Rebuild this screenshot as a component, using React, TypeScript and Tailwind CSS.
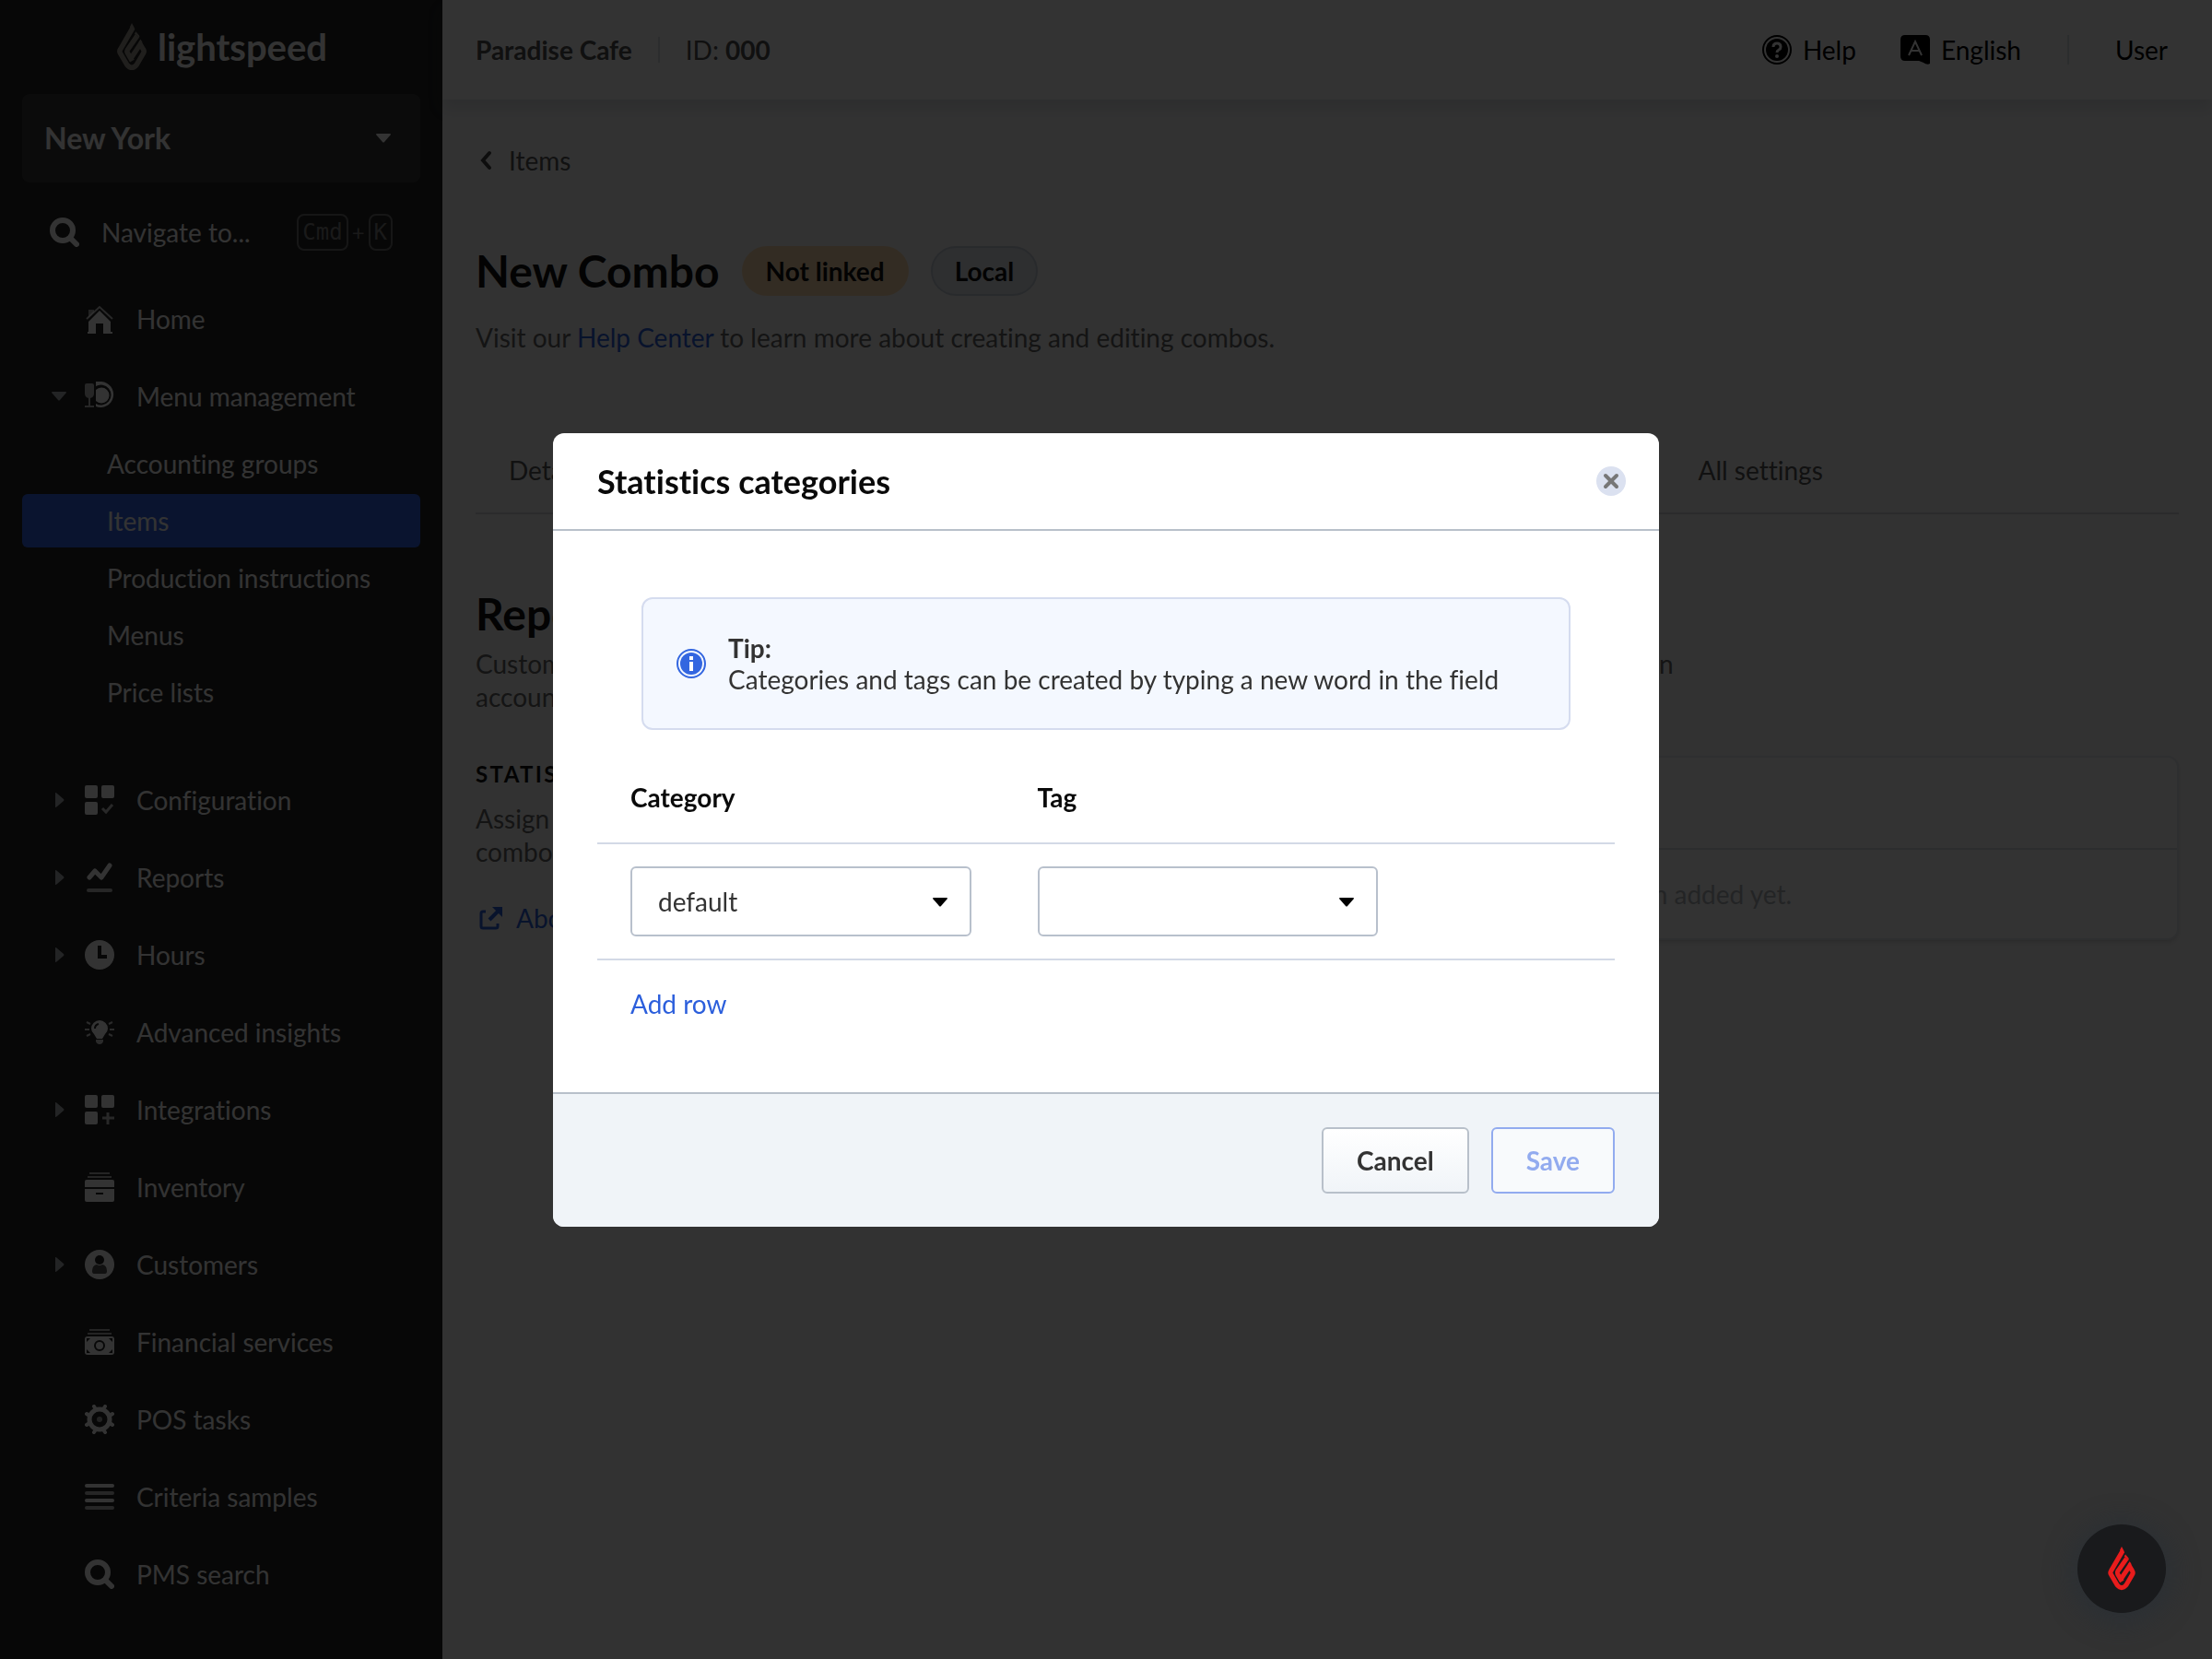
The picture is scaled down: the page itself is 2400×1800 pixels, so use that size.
import React, { useState } from 'react';
import { X } from 'lucide-react';

type IconProps = { className?: string };

const Flame: React.FC<IconProps> = ({ className }) => (
  <svg viewBox="0 0 92 142" className={className} fill="none" stroke="currentColor" strokeWidth="15" aria-hidden="true">
    <path d="M49 14 12 78q-4 6 0 12l20 34q14 16 28 0l20-34q4-6 0-12l-9-15-28 42" />
    <path d="M62 38 33 80q-2 4 0 8l14 24" />
    <path d="M46 0 40 12 53 20q2-3 0-7zM58 25 54 32 68 43q2-3 0-6zM72 48 66 58h12z" fill="currentColor" stroke="none" />
  </svg>
);

const HomeIcon = () => (
  <svg viewBox="0 0 32 32" className="size-8" fill="currentColor" aria-hidden="true">
    <path d="M16 7 28 19v11h2v2H20V21h-8v11H3v-2h1V19z" />
    <path d="M4 6h6v3l-6 6z" opacity=".6" />
    <path d="M2 16 16 3l14 13" fill="none" stroke="currentColor" strokeWidth="2" opacity=".75" />
  </svg>
);

const MenuIcon = () => (
  <svg viewBox="0 0 32 32" className="size-8" fill="currentColor" aria-hidden="true">
    <path d="M0 4q0-2 2-2h6q2 0 2 2v9q0 4-4 5v8h4v2H0v-2h4v-8q-4-1-4-5z" opacity=".7" />
    <path d="M12 9a8.500 8.500 0 1 1 0 12z" />
    <path d="M12 0h6a14 14 0 1 1-6 27v-3a11 11 0 1 0 0-19z" />
  </svg>
);

const GridCheckIcon = () => (
  <svg viewBox="0 0 32 32" className="size-8" fill="currentColor" aria-hidden="true">
    <rect width="14" height="14" rx="2" />
    <rect x="18" width="14" height="14" rx="2" />
    <rect y="18" width="14" height="14" rx="2" />
    <path d="m19 25 4 4 7-8" fill="none" stroke="currentColor" strokeWidth="3" opacity=".75" />
  </svg>
);

const GridPlusIcon = () => (
  <svg viewBox="0 0 32 32" className="size-8" fill="currentColor" aria-hidden="true">
    <rect width="14" height="14" rx="2" />
    <rect x="18" width="14" height="14" rx="2" />
    <rect y="18" width="14" height="14" rx="2" />
    <path d="M25 19v13M19 25h13" fill="none" stroke="currentColor" strokeWidth="3" opacity=".75" />
  </svg>
);

const ReportsIcon = () => (
  <svg viewBox="0 0 32 32" className="size-8" fill="none" stroke="currentColor" aria-hidden="true">
    <path d="m5 16 6-7 7 7 9-13" strokeWidth="5" strokeLinecap="round" strokeLinejoin="round" />
    <path d="M4 30h24" strokeWidth="4" strokeLinecap="round" opacity=".7" />
  </svg>
);

const HoursIcon = () => (
  <svg viewBox="0 0 32 32" className="size-8" aria-hidden="true">
    <circle cx="16" cy="16" r="16" fill="currentColor" />
    <path d="M16 6v12h8" fill="none" stroke="#232323" strokeWidth="4" />
  </svg>
);

const BulbIcon = () => (
  <svg viewBox="0 0 32 32" className="size-8" fill="currentColor" aria-hidden="true">
    <path d="M16 3a9 9 0 0 1 9 9q0 3-3 6l-3 5h-6l-3-5q-3-3-3-6a9 9 0 0 1 9-9z" />
    <path d="M12 24h8v2q-1 3-4 3t-4-3z" opacity=".8" />
    <path d="M11 12q0-4 4-5" fill="none" stroke="#232323" strokeWidth="2" />
    <path d="m2 5 4 2M0 13h5M2 20l4-2M30 5l-4 2M32 13h-5M30 20l-4-2" fill="none" stroke="currentColor" strokeWidth="2" opacity=".8" />
  </svg>
);

const InventoryIcon = () => (
  <svg viewBox="0 0 32 32" className="size-8" fill="currentColor" aria-hidden="true">
    <path d="M5 0h22v2H5zM3 4h26v2H3z" opacity=".65" />
    <path d="M2 8h28q2 0 2 2v6H0v-6q0-2 2-2z" />
    <path d="M0 18h32v12q0 2-2 2H2q-2 0-2-2zm12 4v2h8v-2z" fillRule="evenodd" />
  </svg>
);

const CustomersIcon = () => (
  <svg viewBox="0 0 32 32" className="size-8" aria-hidden="true">
    <circle cx="16" cy="16" r="16" fill="currentColor" />
    <circle cx="16" cy="11" r="5" fill="#232323" />
    <path d="M8 23q0-6 5-7 3 2 6 0 5 1 5 7 0 3-2 3H10q-2 0-2-3z" fill="#555" />
  </svg>
);

const MoneyIcon = () => (
  <svg viewBox="0 0 32 32" className="size-8" fill="currentColor" aria-hidden="true">
    <path d="M5 2h22v2H5zM3 6h26v2H3z" opacity=".65" />
    <rect y="10" width="32" height="20" rx="3" />
    <circle cx="16" cy="20" r="5" fill="none" stroke="#232323" strokeWidth="2" />
    <path d="M2 12h4l-4 4zM30 12h-4l4 4zM2 28h4l-4-4zM30 28h-4l4-4z" fill="#232323" />
  </svg>
);

const GearIcon = () => (
  <svg viewBox="0 0 32 32" className="size-8" fill="none" stroke="currentColor" aria-hidden="true">
    <circle cx="16" cy="16" r="11" strokeWidth="5" />
    <path
      d="M20 5l2-3M27 12l3-2M27 20l3 2M20 27l2 3M12 27l-2 3M5 20l-3 2M5 12l-3-2M12 5l-2-3"
      strokeWidth="4"
      strokeLinecap="round"
    />
    <circle cx="16" cy="16" r="3" fill="currentColor" stroke="none" opacity=".6" />
  </svg>
);

const ListIcon = () => (
  <svg viewBox="0 0 32 32" className="size-8" fill="none" stroke="currentColor" strokeWidth="4" strokeLinecap="round" aria-hidden="true">
    <path d="M2 4h28M2 20h28" />
    <path d="M2 12h28M2 28h28" opacity=".7" />
  </svg>
);

const SearchIcon = () => (
  <svg viewBox="0 0 32 32" className="size-8" fill="none" stroke="currentColor" aria-hidden="true">
    <circle cx="14" cy="14" r="11" strokeWidth="6" />
    <path d="m22 22 7 7" strokeWidth="6" strokeLinecap="round" />
  </svg>
);

const CaretDown: React.FC<IconProps> = ({ className }) => (
  <svg viewBox="0 0 16 10" className={className} fill="currentColor" aria-hidden="true">
    <path d="M1 0h14q1 0 1 1L9 9q-1 1-2 0L0 1q0-1 1-1z" />
  </svg>
);

const CaretRight = () => (
  <svg viewBox="0 0 10 16" className="h-4 w-2.5" fill="currentColor" aria-hidden="true">
    <path d="M0 0q1 0 2 1l7 6q1 1 0 2l-7 6q-1 1-2 1z" />
  </svg>
);

interface NavItem {
  label: string;
  icon: React.ReactNode;
  expandable?: boolean;
  children?: string[];
}

const navItems: NavItem[] = [
  { label: 'Home', icon: <HomeIcon /> },
  {
    label: 'Menu management',
    icon: <MenuIcon />,
    children: ['Accounting groups', 'Items', 'Production instructions', 'Menus', 'Price lists'],
  },
  { label: 'Configuration', icon: <GridCheckIcon />, expandable: true },
  { label: 'Reports', icon: <ReportsIcon />, expandable: true },
  { label: 'Hours', icon: <HoursIcon />, expandable: true },
  { label: 'Advanced insights', icon: <BulbIcon /> },
  { label: 'Integrations', icon: <GridPlusIcon />, expandable: true },
  { label: 'Inventory', icon: <InventoryIcon /> },
  { label: 'Customers', icon: <CustomersIcon />, expandable: true },
  { label: 'Financial services', icon: <MoneyIcon /> },
  { label: 'POS tasks', icon: <GearIcon /> },
  { label: 'Criteria samples', icon: <ListIcon /> },
  { label: 'PMS search', icon: <SearchIcon /> },
];

const tabs = ['Details', 'Item groups', 'Price points', 'Availability', 'Reporting', 'Advanced', 'All settings'];

const Sidebar: React.FC = () => (
  <aside className="w-[480px] shrink-0 bg-[#232323] px-6 text-white">
    <div className="flex h-[102px] items-center justify-center gap-2.5">
      <Flame className="h-[52px] w-9 text-[#a09a90]" />
      <span className="text-[40px] leading-none font-bold">lightspeed</span>
    </div>
    <button type="button" className="flex h-24 w-full items-center justify-between rounded-lg bg-[#3a3a3a] pr-8 pl-6 text-[32px] font-bold">
      New York
      <CaretDown className="h-2.5 w-4" />
    </button>
    <button type="button" className="mt-3 flex h-[84px] w-full items-center pr-[30px] pl-[30px] text-left">
      <SearchIcon />
      <span className="ml-6 flex-1">Navigate to...</span>
      <span className="flex items-center gap-1 font-['DejaVu_Sans_Mono',monospace] text-2xl text-[#808080]">
        <kbd className="rounded-lg border-2 border-[#707070] px-1 font-[inherit] leading-9">Cmd</kbd>
        <span className="font-['Lato',sans-serif]">+</span>
        <kbd className="rounded-lg border-2 border-[#707070] px-1 font-[inherit] leading-9">K</kbd>
      </span>
    </button>
    <nav className="mt-2.5">
      {navItems.map((item) => (
        <div key={item.label}>
          <a href="#" className="flex h-[84px] items-center">
            <span className="flex w-[68px] items-center pl-9 text-[#b0b4b8]">
              {item.expandable && <CaretRight />}
              {item.children && <CaretDown className="-ml-1 h-2.5 w-4" />}
            </span>
            {item.icon}
            <span className="ml-6">{item.label}</span>
          </a>
          {item.children && (
            <div className="mt-0.5 mb-[46px] flex flex-col gap-1">
              {item.children.map((child) => (
                <a
                  key={child}
                  href="#"
                  className={`flex h-[58px] items-center rounded-md pl-[92px] ${child === 'Items' ? 'bg-[#3367e8]' : ''}`}
                >
                  {child}
                </a>
              ))}
            </div>
          )}
        </div>
      ))}
    </nav>
  </aside>
);

const TopBar: React.FC = () => (
  <header className="flex h-[108px] items-center bg-white pr-12 pl-9 text-[#505050] shadow-[0_10px_16px_rgba(60,80,110,0.14)]">
    <strong>Paradise Cafe</strong>
    <span className="mx-7 h-7 w-0.5 bg-[#dde0e5]" />
    <span>
      ID: <strong>000</strong>
    </span>
    <div className="ml-auto flex items-center text-black">
      <a href="#" className="flex items-center gap-3">
        <svg viewBox="0 0 32 32" className="size-8" aria-hidden="true">
          <circle cx="16" cy="16" r="15" fill="none" stroke="currentColor" strokeWidth="2" />
          <circle cx="16" cy="16" r="12" fill="currentColor" />
          <path d="M12 13q0-4 4-4t4 4q0 2-2 3-2 1-2 3" fill="none" stroke="#fff" strokeWidth="3" />
          <circle cx="16" cy="23" r="2" fill="#fff" />
        </svg>
        Help
      </a>
      <a href="#" className="ml-12 flex items-center gap-3">
        <svg viewBox="0 0 32 32" className="size-8" aria-hidden="true">
          <path d="M5 0h22q5 0 5 5v26q-3 2-7-1l-5-2H5q-5 0-5-5V5q0-5 5-5z" fill="currentColor" />
          <path d="m9 22 7-15 7 15M12 17h8" fill="none" stroke="#fff" strokeWidth="2" />
        </svg>
        English
      </a>
      <span className="mx-[50px] h-8 w-0.5 bg-[#dde0e5]" />
      <a href="#">User</a>
    </div>
  </header>
);

const ComboPage: React.FC = () => (
  <main className="px-9 pt-12 text-[#666]">
    <a href="#" className="flex items-center gap-4 text-[#555] leading-9">
      <svg viewBox="0 0 24 24" className="-mr-1 size-6 text-[#444]" fill="none" stroke="currentColor" strokeWidth="4" strokeLinecap="round" aria-hidden="true">
        <path d="m15 4-7 8 7 8" />
      </svg>
      Items
    </a>
    <div className="mt-[72px] flex items-center">
      <h1 className="text-5xl leading-[60px] font-bold text-[#111]">New Combo</h1>
      <span className="ml-6 rounded-full bg-[#ffddb0] px-[26px] leading-[54px] font-bold text-[#111]">Not linked</span>
      <span className="ml-6 rounded-full border-2 border-[#c9d1dc] bg-[#e3e8f0] px-6 leading-[50px] font-bold text-[#111]">Local</span>
    </div>
    <p className="mt-6 leading-9">
      Visit our <a href="#" className="text-[#2c5fdc]">Help Center</a> to learn more about creating and editing combos.
    </p>
    <div role="tablist" className="mt-20 flex h-[94px] items-center gap-[90px] border-b-2 border-[#d5d8dc] pl-9 text-[#555]">
      {tabs.map((tab) => (
        <button key={tab} type="button" role="tab" aria-selected={tab === 'Reporting'}>
          {tab}
        </button>
      ))}
    </div>
    <h2 className="mt-[78px] text-5xl leading-[60px] font-bold text-[#111]">Reporting</h2>
    <p className="mt-1.5 leading-9">
      Customize how this combo is reported in the sales figures. These settings also control everything shown in
      <br />
      accounting reports and statistics.
    </p>
    <div className="mt-[46px] flex items-start gap-12">
      <section className="w-[408px]">
        <h3 className="mt-0.5 text-2xl leading-9 font-bold tracking-widest text-[#111]">STATISTICS</h3>
        <p className="mt-3 leading-9">
          Assign categories to this
          <br />
          combo for reporting.
        </p>
        <a href="#" className="mt-9 flex items-center gap-3 leading-9 text-[#2c5fdc]">
          <svg viewBox="0 0 32 32" className="size-8" fill="none" stroke="currentColor" strokeWidth="3" aria-hidden="true">
            <path d="M11 9H8q-2 0-2 2v14q0 2 2 2h14q2 0 2-2v-3" />
            <path d="M15 18 26 7" strokeWidth="4" />
            <path d="M18 4h11v11z" fill="currentColor" stroke="none" />
          </svg>
          About statistics
        </a>
      </section>
      <section className="flex-1 rounded-xl border-2 border-[#e6e9ed] bg-white text-center shadow-md">
        <div className="h-[100px] border-b-2 border-[#dde1e6]" />
        <p className="py-8 leading-8 text-[#b0b5bb]">No statistics categories have been added yet.</p>
      </section>
    </div>
  </main>
);

const selectClass =
  'h-[76px] w-full appearance-none rounded-md border-2 border-[#b8c0cc] bg-white px-7 text-[#333]';

const CategoryModal: React.FC = () => {
  const [category, setCategory] = useState('default');
  const [tag, setTag] = useState('');

  return (
    <div className="fixed inset-0 flex items-center justify-center bg-black/80">
      <div role="dialog" aria-modal="true" aria-labelledby="modal-title" className="w-1/2 overflow-hidden rounded-xl bg-white">
        <div className="flex h-[106px] items-center justify-between border-b-2 border-[#b8c0ca] pr-9 pl-12">
          <h2 id="modal-title" className="text-4xl leading-none font-bold text-[#0a0a0a]">Statistics categories</h2>
          <button type="button" aria-label="Close" className="flex size-8 items-center justify-center rounded-full bg-[#dbe1f0] text-[#777]">
            <X className="size-6" strokeWidth={4} />
          </button>
        </div>
        <div className="px-12 pt-[72px] pb-[78px]">
          <div className="mx-12 flex h-36 items-center rounded-xl border-2 border-[#d5dcef] bg-[#f4f8ff] px-9 text-[#333]">
            <svg viewBox="0 0 32 32" className="size-8 shrink-0" aria-hidden="true">
              <circle cx="16" cy="16" r="15" fill="none" stroke="#3366e0" strokeWidth="2" />
              <circle cx="16" cy="16" r="12" fill="#3366e0" />
              <path d="M14 14h4v10h-4zM14 8h4v4h-4z" fill="#fff" />
            </svg>
            <p className="ml-6 leading-[34px]">
              <strong>Tip:</strong>
              <br />
              Categories and tags can be created by typing a new word in the field
            </p>
          </div>
          <table className="mt-6 w-full table-fixed text-left">
            <thead>
              <tr className="h-[99px] border-b-2 border-[#d3d9e6] text-[#0a0a0a]">
                <th className="w-2/5 px-9 font-bold"><label htmlFor="category">Category</label></th>
                <th className="w-2/5 px-9 font-bold"><label htmlFor="tag">Tag</label></th>
                <th />
              </tr>
            </thead>
            <tbody>
              <tr className="h-[126px] border-b-2 border-[#d3d9e6]">
                <td className="px-9">
                  <div className="relative">
                    <select id="category" value={category} onChange={(e) => setCategory(e.target.value)} className={selectClass}>
                      <option>default</option>
                    </select>
                    <CaretDown className="pointer-events-none absolute top-[34px] right-[26px] h-2.5 w-4 text-black" />
                  </div>
                </td>
                <td className="px-9">
                  <div className="relative">
                    <select id="tag" value={tag} onChange={(e) => setTag(e.target.value)} className={selectClass}>
                      <option value="" />
                    </select>
                    <CaretDown className="pointer-events-none absolute top-[34px] right-[26px] h-2.5 w-4 text-black" />
                  </div>
                </td>
                <td />
              </tr>
            </tbody>
          </table>
          <button type="button" className="mt-[29px] ml-9 block leading-9 text-[#2c5fdc]">Add row</button>
        </div>
        <div className="flex items-center justify-end gap-6 border-t-2 border-[#b8c0ca] bg-[#f0f4f8] px-12 py-9">
          <button type="button" className="h-[72px] rounded-md border-2 border-[#b8c0ca] bg-linear-to-b from-white to-[#f0f4f8] px-9 font-bold text-[#333]">
            Cancel
          </button>
          <button type="button" disabled className="h-[72px] rounded-md border-2 border-[#92abef] bg-[#f8fafc] px-9 font-bold text-[#92abef]">
            Save
          </button>
        </div>
      </div>
    </div>
  );
};

const App: React.FC = () => {
  return (
    <div className="flex min-h-screen bg-[#fafafa] font-['Lato',sans-serif] text-[28px] [font-variant-ligatures:none]">
      <Sidebar />
      <div className="min-w-0 flex-1">
        <TopBar />
        <ComboPage />
      </div>
      <CategoryModal />
      <button type="button" aria-label="Lightspeed support" className="fixed right-[50px] bottom-[50px] flex size-24 items-center justify-center rounded-full bg-[#191a1c] text-[#e81c1c] shadow-[0_4px_24px_10px_rgba(40,46,54,0.6)]">
        <Flame className="h-12 w-8" />
      </button>
    </div>
  );
};

export default App;
